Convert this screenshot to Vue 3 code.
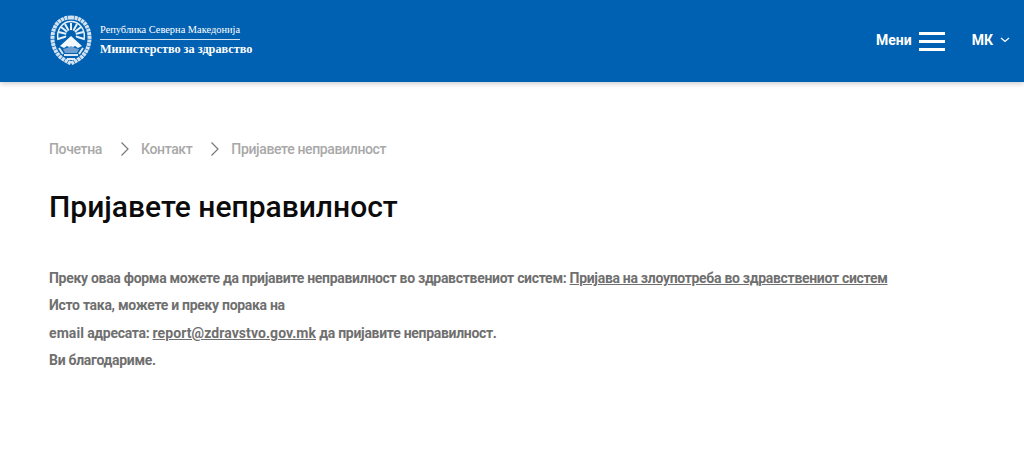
<template>
  <div class="page">
    <header class="header">
      <a class="logo">
        <svg class="emblem" width="42" height="50" viewBox="0 0 42 50" fill="none">
          <!-- wreath -->
          <path d="M21 2.500C9.500 2.500 2.500 11 2.500 23c0 11 6 19 13 22.500l5.500 3 5.500-3c7-3.500 13-11.500 13-22.500C39.500 11 32.500 2.500 21 2.500z" stroke="#d3e2f1" stroke-width="4" stroke-dasharray="3 .6"/>
          <!-- sun arch -->
          <path d="M8 25C6 14 13 6.500 21 6.500S36 14 34 25" stroke="#e8f0f8" stroke-width="1.500"/>
          <!-- sun rays -->
          <g stroke="#e8f0f8" stroke-width="2">
            <path d="M21 20V8"/>
            <path d="M21 20l-6-11"/>
            <path d="M21 20l6-11"/>
            <path d="M21 20L11 12"/>
            <path d="M21 20l10-8"/>
            <path d="M21 20L8.500 17"/>
            <path d="M21 20l12.500-3"/>
            <path d="M21 20L8 24"/>
            <path d="M21 20l13 4"/>
          </g>
          <circle cx="21" cy="20" r="5" fill="#0060b1"/>
          <!-- mountain -->
          <path d="M7 30l14-12 14 12-4 6H11z" fill="#0060b1"/>
          <path d="M10 31l11-10 11 10-4 2-3-2-4 2-4-2-3 2z" fill="#f2f7fb"/>
          <path d="M13 34l4-1 4-2 4 2 4 1-2 4H15z" fill="#6f9fd0"/>
          <path d="M9 33l4 6M33 33l-4 6" stroke="#dbe8f4" stroke-width="2"/>
          <path d="M14 40h14M17 44h8" stroke="#dbe8f4" stroke-width="2"/>
        </svg>
        <div class="logo-text">
          <span class="logo-top">Република Северна Македонија</span>
          <span class="logo-bottom">Министерство за здравство</span>
        </div>
      </a>
      <nav class="nav">
        <span class="nav-label">Мени</span>
        <span class="burger"><i></i><i></i><i></i></span>
        <span class="lang">МК</span>
        <svg class="chevron" width="10" height="6" viewBox="0 0 10 6" fill="none">
          <path d="M1 1l4 3.500L9 1" stroke="#fff" stroke-width="1.300"/>
        </svg>
      </nav>
    </header>

    <main class="content">
      <div class="crumbs">
        <span>Почетна</span>
        <svg width="10" height="16" viewBox="0 0 10 16" fill="none"><path d="M1.500 1.500L8 8l-6.500 6.500" stroke="#777" stroke-width="1.200"/></svg>
        <span>Контакт</span>
        <svg width="10" height="16" viewBox="0 0 10 16" fill="none"><path d="M1.500 1.500L8 8l-6.500 6.500" stroke="#777" stroke-width="1.200"/></svg>
        <span>Пријавете неправилност</span>
      </div>
      <h1>Пријавете неправилност</h1>
      <div class="text">
        <p>Преку оваа форма можете да пријавите неправилност во здравствениот систем: <a>Пријава на злоупотреба во здравствениот систем</a></p>
        <p>Исто така, можете и преку порака на</p>
        <p><span class="latin">email</span> адресата: <a class="latin">report@zdravstvo.gov.mk</a> да пријавите неправилност.</p>
        <p>Ви благодариме.</p>
      </div>
    </main>
  </div>
</template>

<script setup>
</script>

<style>
html, body {
  margin: 0;
  background: #fff;
}
</style>

<style scoped>
.page {
  font-family: Roboto, "Noto Sans", sans-serif;
  height: 456px;
  overflow: hidden;
}
.header {
  height: 82px;
  background: #0060b1;
  box-shadow: 0 1px 6px rgba(0, 0, 0, 0.25);
  display: flex;
  align-items: center;
  justify-content: space-between;
  padding: 0 14px 0 50px;
}
.logo {
  display: flex;
  align-items: center;
  gap: 8px;
  color: #fff;
}
.emblem {
  margin-top: -3px;
}
.logo-text {
  display: flex;
  flex-direction: column;
  font-family: "Liberation Serif", serif;
  width: 153px;
  margin-top: -2px;
}
.logo-top {
  font-size: 10.400px;
  line-height: 14px;
  padding-bottom: 2px;
  border-bottom: 1px solid #cfe0f0;
  width: 140px;
  white-space: nowrap;
}
.logo-bottom {
  font-size: 12.250px;
  font-weight: 700;
  line-height: 15px;
  margin-top: 2px;
  white-space: nowrap;
}
.nav {
  display: flex;
  align-items: center;
  color: #fff;
  font-size: 14px;
  font-weight: 700;
}
.nav-label {
  margin-right: 7px;
  margin-top: -2px;
}
.burger {
  display: flex;
  flex-direction: column;
  gap: 5px;
  width: 26px;
  margin-right: 27px;
}
.burger i {
  display: block;
  height: 3px;
  background: #fff;
}
.lang {
  margin-right: 7px;
  margin-top: -2px;
}
.chevron {
  margin-top: -2px;
}
.content {
  padding: 58px 49px 0;
}
.crumbs {
  display: flex;
  align-items: center;
  color: #a8a8a8;
  font-size: 14px;
  letter-spacing: -0.36px;
  font-weight: 500;
  line-height: 18px;
}
.crumbs svg {
  margin: 0 11px 0 18px;
}
h1 {
  margin: 28px 0 0;
  font-size: 30px;
  font-weight: 500;
  line-height: 42px;
  color: #0b0b0b;
}
.text {
  margin-top: 37px;
  color: #6f6f6f;
  font-size: 14px;
  letter-spacing: -0.3px;
  font-weight: 700;
  line-height: 27.400px;
}
.text p {
  margin: 0;
}
.text a {
  text-decoration: underline;
}
.latin {
  letter-spacing: 0.08px;
}
</style>
